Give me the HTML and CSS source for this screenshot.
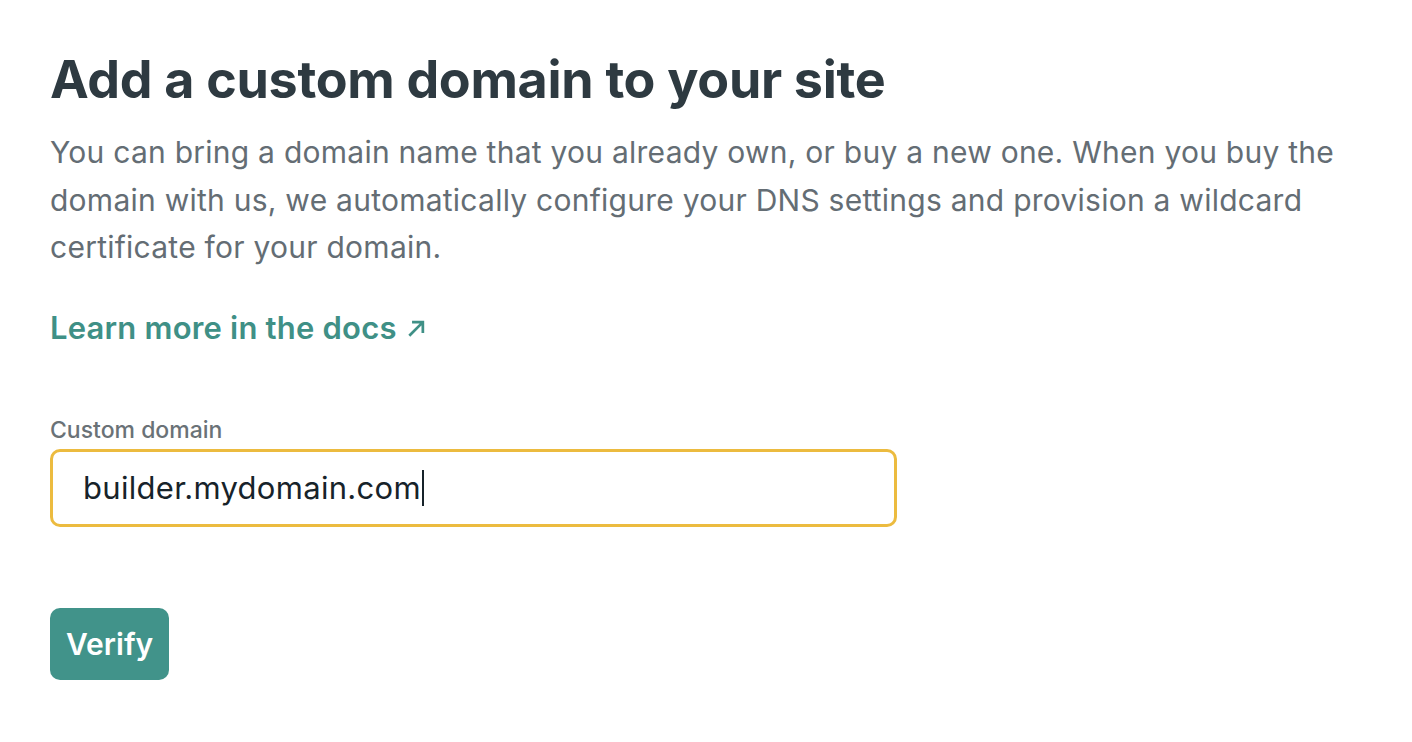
FILE: index.html
```html
<!DOCTYPE html>
<html lang="en">
<head>
<meta charset="utf-8">
<title>Add a custom domain</title>
<link rel="stylesheet" href="styles.css">
</head>
<body>
<main class="page">
  <h1 class="title">Add a custom domain to your site</h1>
  <p class="lead">You can bring a domain name that you already own, or buy a new one. When you buy the domain with us, we automatically configure your DNS settings and provision a wildcard certificate for your domain.</p>
  <a class="docs-link" href="#">Learn more in the docs <svg class="arrow" width="20" height="20" viewBox="0 0 20 20" aria-hidden="true"><path d="M2.5 17.5 L16 4 M6 3.5 H16.5 V14" fill="none" stroke="currentColor" stroke-width="3" stroke-linecap="square"/></svg></a>
  <form class="form">
    <label class="field-label" for="domain">Custom domain</label>
    <div class="input"><span class="input-value">builder.mydomain.com</span><span class="caret"></span></div>
    <button class="btn" type="button">Verify</button>
  </form>
</main>
</body>
</html>
```
FILE: styles.css
```css
* { box-sizing: border-box; }
html, body { margin: 0; padding: 0; background: #fff; }
body { font-family: Inter, "Liberation Sans", sans-serif; }
.page { padding: 50px 50px 0 50px; }
.title {
  margin: 0;
  font-size: 52px;
  font-weight: 700;
  color: #2e3a41;
  line-height: 60px;
  letter-spacing: -0.3px;
}
.lead {
  margin: 19px 0 0 0;
  font-size: 30px;
  line-height: 47.5px;
  letter-spacing: 0.25px;
  color: #646d74;
  max-width: 1345px;
}
.docs-link {
  display: inline-flex;
  align-items: center;
  gap: 11px;
  margin-top: 36px;
  font-size: 31px;
  font-weight: 600;
  letter-spacing: 0.2px;
  color: #3f9086;
  text-decoration: none;
  line-height: 40px;
}
.arrow { width: 18px; height: 18px; }
.form { display: flex; flex-direction: column; align-items: flex-start; margin-top: 67px; }
.field-label { font-size: 23px; font-weight: 500; color: #6a7277; line-height: 30px; }
.input {
  margin-top: 4px;
  width: 847px;
  height: 78px;
  border: 3px solid #ecbb3f;
  border-radius: 10px;
  display: flex;
  align-items: center;
  padding-left: 30px;
  font-size: 31px;
  letter-spacing: 0.3px;
  color: #17232a;
}
.caret { width: 2px; height: 36px; background: #17232a; margin-left: 1px; }
.btn {
  margin-top: 81px;
  height: 72px;
  padding: 0 16px;
  border: none;
  border-radius: 10px;
  background: #41938a;
  color: #fff;
  font-family: inherit;
  font-size: 30px;
  font-weight: 600;
}
```
